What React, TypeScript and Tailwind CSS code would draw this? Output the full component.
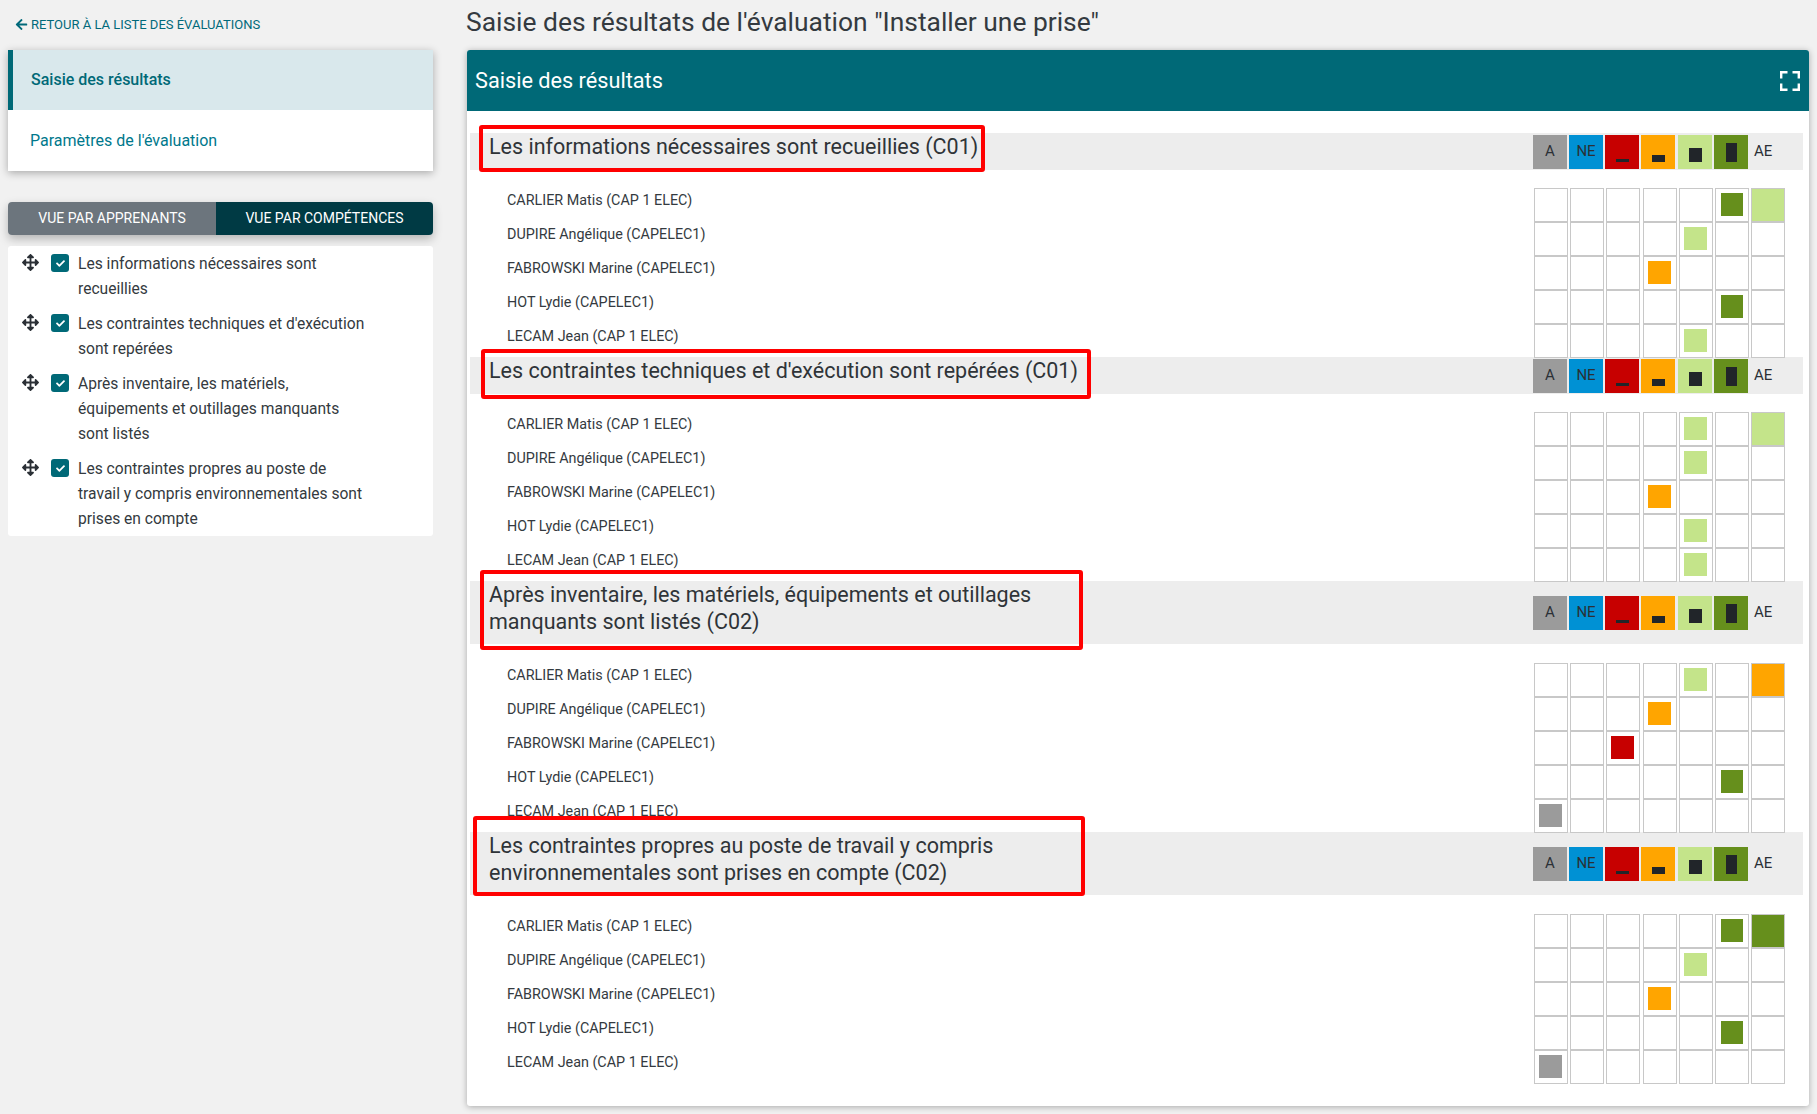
import React from "react";
import { FaArrowLeft, FaArrowsAlt, FaCheck } from "react-icons/fa";

const font = { fontFamily: "Roboto, sans-serif" };

const names = [
  "CARLIER Matis (CAP 1 ELEC)",
  "DUPIRE Angélique (CAPELEC1)",
  "FABROWSKI Marine (CAPELEC1)",
  "HOT Lydie (CAPELEC1)",
  "LECAM Jean (CAP 1 ELEC)",
];

const COLORS: Record<string, string> = {
  A: "bg-[#9b9b9b]",
  N: "bg-[#0091d4]",
  R: "bg-[#c70000]",
  O: "bg-[#ffa500]",
  L: "bg-[#c4e48a]",
  D: "bg-[#668f1c]",
};

type Section = {
  title: React.ReactNode;
  tall?: boolean;
  rows: { col: number; color: string; ae?: string }[];
};

const sections: Section[] = [
  {
    title: "Les informations nécessaires sont recueillies (C01)",
    rows: [
      { col: 5, color: "D", ae: "L" },
      { col: 4, color: "L" },
      { col: 3, color: "O" },
      { col: 5, color: "D" },
      { col: 4, color: "L" },
    ],
  },
  {
    title: "Les contraintes techniques et d'exécution sont repérées (C01)",
    rows: [
      { col: 4, color: "L", ae: "L" },
      { col: 4, color: "L" },
      { col: 3, color: "O" },
      { col: 4, color: "L" },
      { col: 4, color: "L" },
    ],
  },
  {
    title: (
      <>
        Après inventaire, les matériels, équipements et outillages
        <br />
        manquants sont listés (C02)
      </>
    ),
    tall: true,
    rows: [
      { col: 4, color: "L", ae: "O" },
      { col: 3, color: "O" },
      { col: 2, color: "R" },
      { col: 5, color: "D" },
      { col: 0, color: "A" },
    ],
  },
  {
    title: (
      <>
        Les contraintes propres au poste de travail y compris
        <br />
        environnementales sont prises en compte (C02)
      </>
    ),
    tall: true,
    rows: [
      { col: 5, color: "D", ae: "D" },
      { col: 4, color: "L" },
      { col: 3, color: "O" },
      { col: 5, color: "D" },
      { col: 0, color: "A" },
    ],
  },
];

const sideItems: string[][] = [
  ["Les informations nécessaires sont", "recueillies"],
  ["Les contraintes techniques et d'exécution", "sont repérées"],
  ["Après inventaire, les matériels,", "équipements et outillages manquants", "sont listés"],
  ["Les contraintes propres au poste de", "travail y compris environnementales sont", "prises en compte"],
];

function Legend() {
  return (
    <div className="grid grid-cols-[36px_36px_36px_37px_36px_36px_53px] shrink-0 text-[15px] text-[#2b3036]">
      <div className={`w-[34px] h-[34px] flex items-center justify-center ${COLORS.A}`}>A</div>
      <div className={`w-[34px] h-[34px] flex items-center justify-center ${COLORS.N}`}>NE</div>
      <div className={`w-[34px] h-[34px] flex items-end justify-center pb-[7px] ${COLORS.R}`}>
        <div className="w-[13px] h-[3px] bg-[#212529]" />
      </div>
      <div className={`w-[34px] h-[34px] flex items-end justify-center pb-[7px] ${COLORS.O}`}>
        <div className="w-[13px] h-[7px] bg-[#212529]" />
      </div>
      <div className={`w-[34px] h-[34px] flex items-end justify-center pb-[7px] ${COLORS.L}`}>
        <div className="w-[13px] h-[14px] bg-[#212529]" />
      </div>
      <div className={`w-[34px] h-[34px] flex items-end justify-center pb-[7px] ${COLORS.D}`}>
        <div className="w-[11px] h-[19px] bg-[#212529]" />
      </div>
      <div className="h-[34px] flex items-center pl-[4px]">AE</div>
    </div>
  );
}

function Row({ name, col, color, ae }: { name: string; col: number; color: string; ae?: string }) {
  return (
    <div className="flex h-[34px] pl-[37px] pr-[18px]">
      <div className="flex-1 text-[14.35px] leading-[26px] text-[#343a40]">{name}</div>
      <div className="grid grid-cols-[36px_36px_37px_36px_36px_36px_34px] shrink-0">
        {[0, 1, 2, 3, 4, 5].map((c) => (
          <div key={c} className="w-[34px] h-[34px] border border-[#c8c8c8] pl-[4px] pt-[4px]">
            {c === col && (
              <div className={`h-[23px] ${c === 5 ? "ml-[1px] w-[22px]" : "w-[23px]"} ${COLORS[color]}`} />
            )}
          </div>
        ))}
        <div className={`w-[34px] h-[34px] border border-[#c8c8c8] ${ae ? COLORS[ae] : ""}`} />
      </div>
    </div>
  );
}

function SectionBlock({ s }: { s: Section }) {
  return (
    <div>
      <div className={`flex items-center justify-between bg-[#ededed] pl-[19px] ${s.tall ? "h-[63px]" : "h-[37px]"}`}>
        <div className={`text-[21.5px] leading-[27px] text-[#2f3438] ${s.tall ? "pb-[9px]" : "pb-[10px]"}`}>{s.title}</div>
        <Legend />
      </div>
      <div className={`${s.tall ? "mt-[19px]" : "mt-[18px]"} mb-[-1px]`}>
        {s.rows.map((r, i) => (
          <Row key={i} name={names[i]} col={r.col} color={r.color} ae={r.ae} />
        ))}
      </div>
    </div>
  );
}

export default function App() {
  return (
    <div className="relative min-h-[1114px] bg-[#f1f1f1] flex pl-[8px] pr-[8px]" style={font}>
      <aside className="w-[425px] shrink-0 mr-[34px]">
        <a className="flex items-center h-[50px] pl-[7px] pb-[1px] text-[13px] uppercase text-[#00697a]">
          <FaArrowLeft className="w-[13px] h-[13px] mr-[3px]" />
          Retour à la liste des évaluations
        </a>
        <nav className="bg-white shadow-[0_2px_8px_rgba(0,0,0,0.3)] text-[16px]">
          <div className="h-[60px] bg-[#d9e8ec] border-l-[5px] border-[#006977] flex items-center pl-[18px] text-[#006977] font-medium">
            Saisie des résultats
          </div>
          <div className="h-[61px] flex items-center pl-[22px] pt-[1px] text-[#00788c]">Paramètres de l'évaluation</div>
        </nav>
        <div className="mt-[31px] flex h-[33px] rounded-[4px] overflow-hidden text-white text-[14px] uppercase shadow-[0_4px_10px_rgba(0,0,0,0.25)]">
          <div className="w-[208px] bg-[#6c757d] flex items-center justify-center">Vue par apprenants</div>
          <div className="flex-1 bg-[#003a44] flex items-center justify-center">Vue par compétences</div>
        </div>
        <div className="mt-[11px] bg-white rounded-[3px] pt-[5px] pb-[5px] flex flex-col gap-[10px]">
          {sideItems.map((lines, i) => (
            <div key={i} className="flex pl-[14px]">
              <FaArrowsAlt className="w-[17px] h-[17px] mt-[3px] text-[#2b3036] shrink-0" />
              <div className="ml-[12px] mt-[3px] w-[18px] h-[18px] rounded-[3px] bg-[#006977] flex items-center justify-center shrink-0">
                <FaCheck className="w-[9px] h-[9px] text-white" />
              </div>
              <div className="ml-[9px] pt-[1px] mb-[-1px] text-[15.6px] leading-[25px] text-[#343a40]">
                {lines.map((l, j) => (
                  <div key={j} className="whitespace-nowrap">{l}</div>
                ))}
              </div>
            </div>
          ))}
        </div>
      </aside>
      <main className="flex-1 min-w-0">
        <h1 className="h-[50px] pt-[4px] text-[26.4px] leading-[36px] text-[#343a40] -ml-px">
          Saisie des résultats de l'évaluation "Installer une prise"
        </h1>
        <section className="bg-white rounded-[3px] shadow-[0_1px_6px_rgba(0,0,0,0.3)] h-[1056px] overflow-hidden">
          <header className="h-[61px] bg-[#006977] flex items-center justify-between pl-[8px] pr-[9px] text-white text-[21.7px]">
            <span className="pt-[2px]">Saisie des résultats</span>
            <svg width="20" height="20" viewBox="0 0 20 20" fill="none" stroke="#ffffff" strokeWidth="2.4">
              <path d="M1.2 7.5V1.2H7.5M12.5 1.2H18.8V7.5M18.8 12.5V18.8H12.5M7.5 18.8H1.2V12.5" />
            </svg>
          </header>
          <div className="pl-[3px] pr-[6px] pt-[22px]">
            {sections.map((s, i) => (
              <SectionBlock key={i} s={s} />
            ))}
          </div>
        </section>
      </main>
      {/* annotation frames lying over the content */}
      <div className="absolute left-[479px] top-[125px] w-[506px] h-[47px] border-[4px] border-[#ff0000] rounded-[3px]" />
      <div className="absolute left-[481px] top-[349px] w-[610px] h-[50px] border-[4px] border-[#ff0000] rounded-[3px]" />
      <div className="absolute left-[480px] top-[570px] w-[603px] h-[80px] border-[4px] border-[#ff0000] rounded-[3px]" />
      <div className="absolute left-[473px] top-[816px] w-[612px] h-[80px] border-[4px] border-[#ff0000] rounded-[3px]" />
    </div>
  );
}
